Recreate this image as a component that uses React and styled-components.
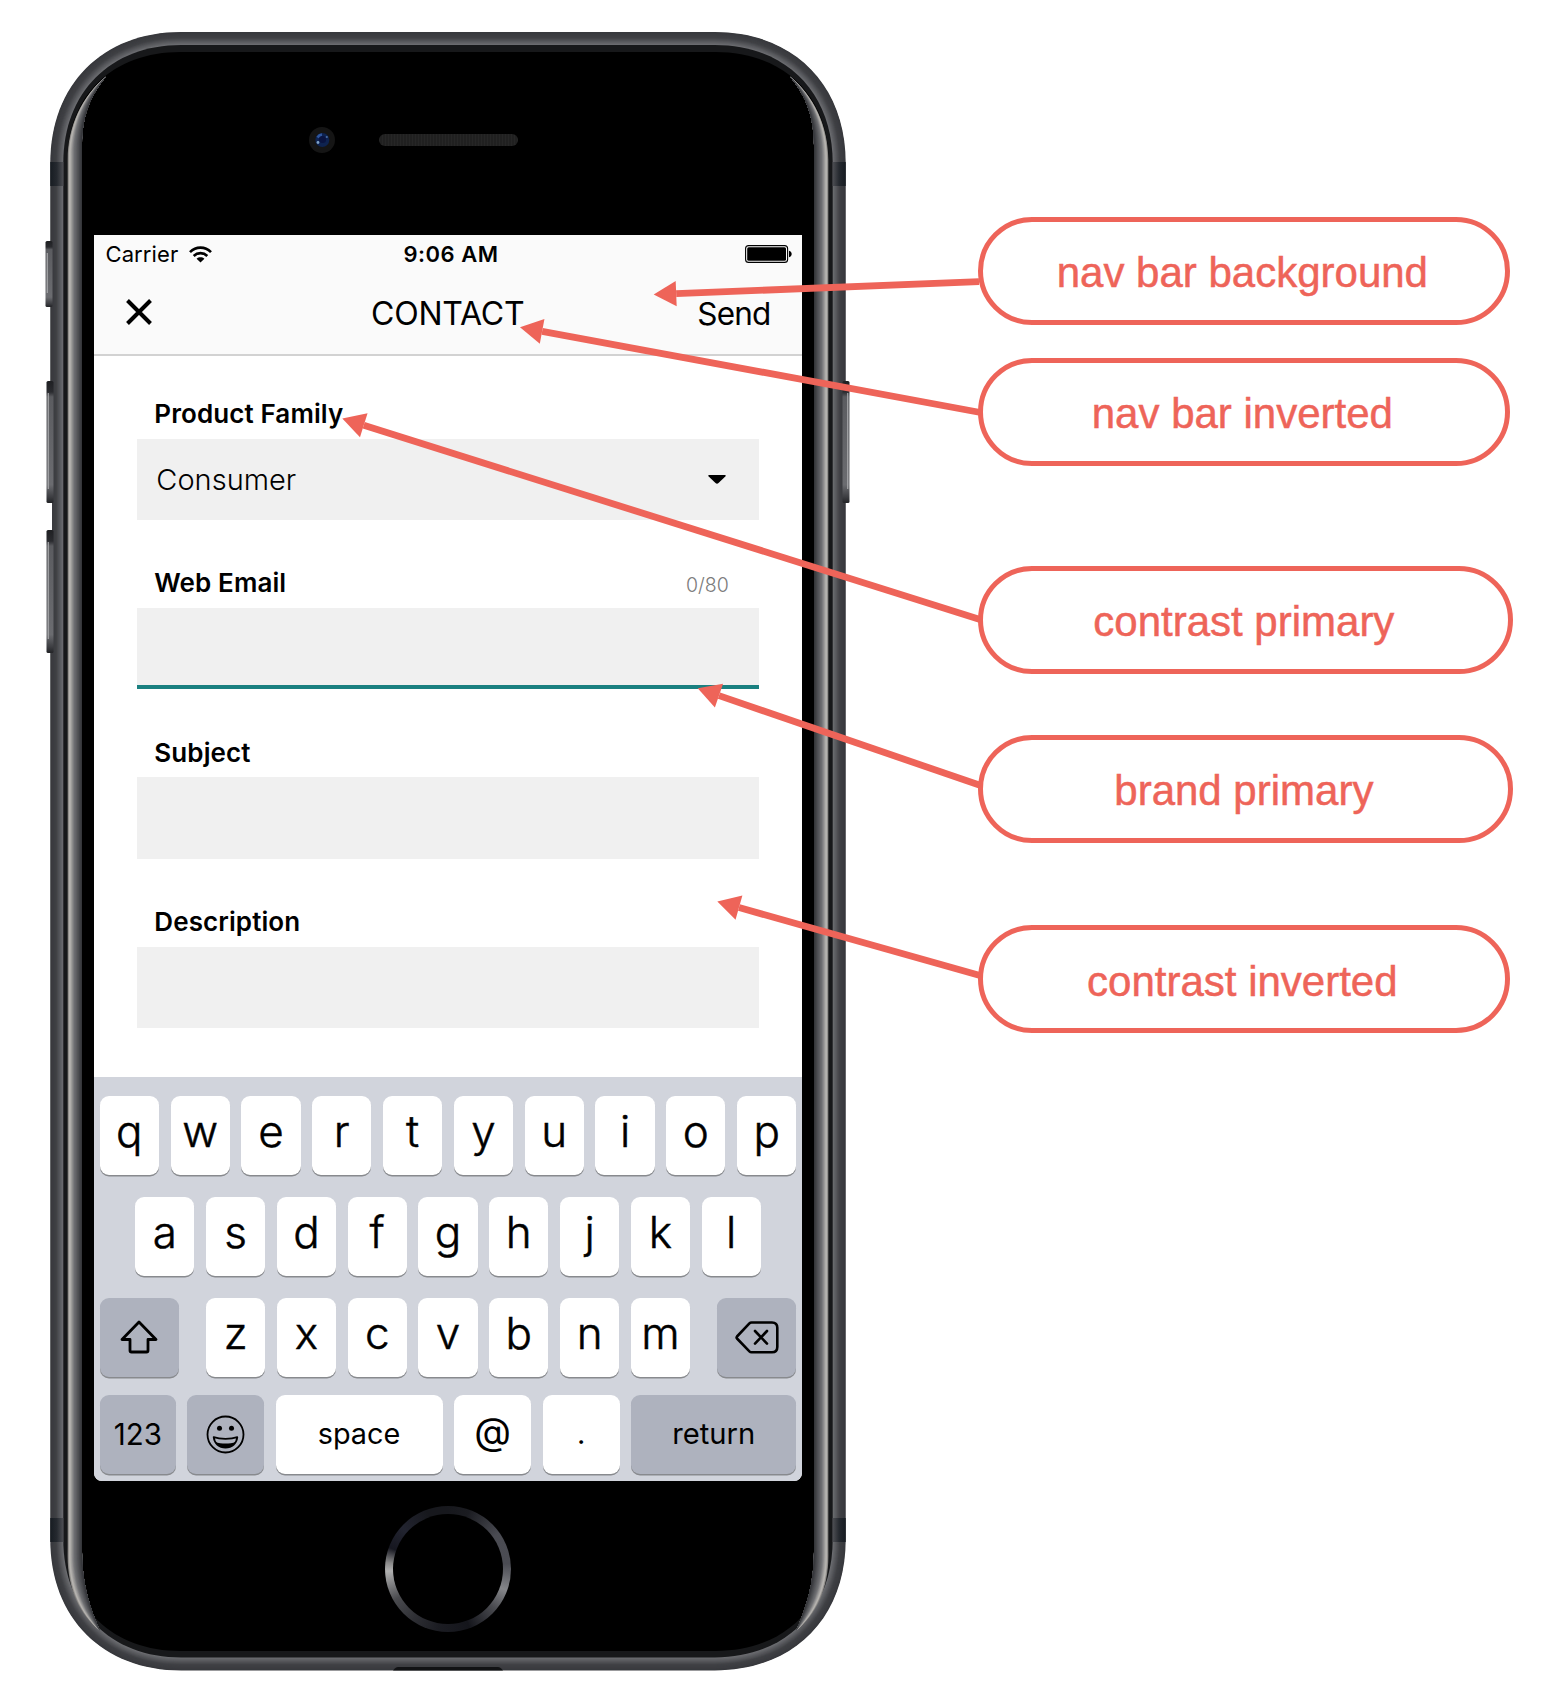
import React from "react";
import styled, { createGlobalStyle } from "styled-components";

const Global = createGlobalStyle`
  *, *::before, *::after { box-sizing: border-box; }
  body { margin: 0; background: #fff; overflow: hidden; }
`;

const ACCENT = "#ee6459";
const UI = `Inter, Roboto, "Liberation Sans", sans-serif`;

const Page = styled.main`
  position: relative;
  display: flex;
  width: 1552px;
  height: 1706px;
  background: #fff;
  font-family: ${UI};
  color: #000;
`;

/* ---------- device ---------- */

const Phone = styled.section`
  position: relative;
  display: flex;
  flex-direction: column;
  align-items: center;
  width: 896px;
  height: 1706px;
  flex: none;
`;

const Hardware = styled.svg`
  position: absolute;
  inset: 0;
`;

const TopBezel = styled.div`
  position: relative;
  display: flex;
  align-items: center;
  gap: 44px;
  width: 100%;
  height: 235px;
  padding: 45px 0 0 309px;
`;

const Camera = styled.svg`
  flex: none;
`;

const Speaker = styled.div`
  width: 139px;
  height: 12px;
  border-radius: 6px;
  background: repeating-linear-gradient(90deg, #262626 0 1px, #202020 1px 3px);
`;

const BottomBezel = styled.div`
  position: relative;
  display: flex;
  justify-content: center;
  width: 100%;
  padding-top: 25px;
`;

const HomeButton = styled.div`
  width: 126px;
  height: 126px;
  padding: 8px;
  border-radius: 50%;
  background: conic-gradient(
    #17181d 0deg,
    #1b1c21 20deg,
    #4a4b52 55deg,
    #4b4c53 85deg,
    #85868a 110deg,
    #4a4b50 130deg,
    #14151b 160deg,
    #1c1d23 190deg,
    #2e2f34 215deg,
    #4a4b4f 240deg,
    #b0b0b0 268deg,
    #8a8a8a 276deg,
    #161720 290deg,
    #222430 312deg,
    #17181d 340deg,
    #17181d 360deg
  );

  &::before {
    content: "";
    display: block;
    height: 100%;
    border-radius: 50%;
    background: #000;
  }
`;

/* ---------- screen ---------- */

const Screen = styled.div`
  position: relative;
  display: flex;
  flex-direction: column;
  width: 708px;
  height: 1246px;
  flex: none;
  background: #fff;
  border-radius: 0 0 8px 8px;
  overflow: hidden;
`;

const Header = styled.header`
  height: 121px;
  flex: none;
  background: #fafafa;
  border-bottom: 2px solid #d2d2d2;
`;

const StatusBar = styled.div`
  display: grid;
  grid-template-columns: 1fr auto 1fr;
  align-items: center;
  height: 38px;
  padding: 0 10.5px 0 11.5px;
  line-height: 38px;
`;

const Carrier = styled.div`
  display: flex;
  align-items: center;
  gap: 10.5px;
  font-size: 22px;
  letter-spacing: 0.1px;
`;

const Clock = styled.div`
  font-size: 22px;
  font-weight: 600;
  letter-spacing: 0.5px;
  padding-left: 5px;
`;

const Battery = styled.svg`
  justify-self: end;
`;

const NavBar = styled.div`
  display: grid;
  grid-template-columns: 1fr auto 1fr;
  align-items: center;
  height: 80px;
  padding: 0 31.5px 0 31px;
  font-size: 32px;
`;

const CloseIcon = styled.svg`
  margin-bottom: 2px;
`;

const NavTitle = styled.h1`
  margin: 0;
  font-size: 32px;
  font-weight: 400;
  letter-spacing: -0.2px;
`;

const SendButton = styled.span`
  justify-self: end;
  font-size: 31.5px;
  letter-spacing: -0.8px;
`;

const Form = styled.div`
  display: flex;
  flex-direction: column;
  flex: 1;
  padding: 0 43.3px;
`;

const Field = styled.div`
  height: 169.4px;
  flex: none;
  padding-top: 34px;
`;

const LabelRow = styled.div`
  display: flex;
  justify-content: space-between;
  height: 48.7px;
  padding: 0 30px 0 17px;
`;

const Label = styled.label`
  font-size: 26px;
  font-weight: 600;
  letter-spacing: 0.1px;
  line-height: 47px;
`;

const Counter = styled.span`
  font-size: 19.5px;
  font-weight: 300;
  line-height: 53px;
  color: #7c7c7c;
`;

const Input = styled.div`
  display: flex;
  align-items: center;
  justify-content: space-between;
  height: 81.3px;
  padding: 0 33px 0 19px;
  background: #f0f0f0;
  border-bottom: ${(p) => (p.$active ? "4px solid #1a8080" : "none")};
  font-size: 29px;
  font-weight: 300;
`;

/* ---------- keyboard ---------- */

const Keyboard = styled.div`
  display: flex;
  flex-direction: column;
  height: 404px;
  flex: none;
  padding: 19px 5.7px 0;
  background: #d1d4dc;
`;

const KeyRow = styled.div`
  display: flex;
  flex: none;
  justify-content: ${(p) => p.$justify || "space-between"};
  gap: ${(p) => p.$gap || "11.5px"};
  height: ${(p) => p.$height || 101}px;
`;

const Key = styled.div`
  display: flex;
  align-items: center;
  justify-content: center;
  width: ${(p) => p.$width || 59.3}px;
  height: 79px;
  flex: none;
  padding-bottom: ${(p) => p.$lift ?? 9}px;
  border-radius: 9px;
  background: ${(p) => (p.$dark ? "#aeb2be" : "#fff")};
  box-shadow: 0 1.5px 0 #888a8e;
  font-size: ${(p) => p.$size || 44}px;
  font-weight: ${(p) => p.$weight || 300};
  line-height: 1;
  -webkit-text-stroke: ${(p) => (p.$weight ? 0 : 0.5)}px #000;
`;

const LetterGroup = styled.div`
  display: flex;
  gap: 11.5px;
`;

/* ---------- callouts ---------- */

const Callouts = styled.aside`
  display: flex;
  flex-direction: column;
  align-items: flex-start;
  padding: 216.5px 0 0 82px;
`;

const Callout = styled.div`
  display: flex;
  align-items: center;
  justify-content: center;
  width: ${(p) => p.$width}px;
  height: 108px;
  margin-bottom: ${(p) => p.$after}px;
  padding: 5px 3px 0 0;
  border: 5px solid ${ACCENT};
  border-radius: 54px;
  background: #fff;
  color: ${ACCENT};
  font-family: "Liberation Sans", Arial, sans-serif;
  font-size: 42px;
  line-height: 1;
  white-space: nowrap;
  -webkit-text-stroke: 0.5px ${ACCENT};
`;

const Pointers = styled.svg`
  position: absolute;
  inset: 0;
  pointer-events: none;
`;

const mix = (a, b, t) => {
  const c = a.map((v, i) => Math.round(v + (b[i] - v) * t));
  return `rgb(${c.join(",")})`;
};

/* Rounded rectangle whose corners are slightly fuller than a circular arc. */
function shell(x, y, x2, y2, rx, ry, k = 0.6) {
  const hx = rx * (1 - k);
  const hy = ry * (1 - k);
  return `M${x} ${y + ry}C${x} ${y + hy} ${x + hx} ${y} ${x + rx} ${y}H${x2 - rx}C${x2 - hx} ${y} ${x2} ${y + hy} ${x2} ${y + ry}V${y2 - ry}C${x2} ${y2 - hy} ${x2 - hx} ${y2} ${x2 - rx} ${y2}H${x + rx}C${x + hx} ${y2} ${x} ${y2 - hy} ${x} ${y2 - ry}Z`;
}

/* One layer of the polished edge; t runs from the outer rim (0) to the glass (1). */
const GLOSS_OUT = [82, 96, 67.6, 126, 67.6, 160, 1556, 67.6, 1590, 80, 1614];
const GLOSS_IN = [93, 93, 82, 112, 82, 145, 1552, 82, 1584, 90, 1608];
function glossPath(t) {
  const v = GLOSS_OUT.map((o, i) => o + (GLOSS_IN[i] - o) * t);
  const n = GLOSS_IN;
  return `M106 76.5C${v[0]} ${v[1]} ${v[2]} ${v[3]} ${v[4]} ${v[5]}V${v[6]}C${v[7]} ${v[8]} ${v[9]} ${v[10]} 100 1631C${n[9]} ${n[10]} ${n[7]} ${n[8]} ${n[4]} ${n[6]}V${n[5]}C${n[2]} ${n[3]} ${n[0]} ${n[1]} 106 76.5Z`;
}

function glossColor(t) {
  if (t < 0.12) return mix([130, 128, 126], [190, 187, 183], t / 0.12);
  if (t < 0.45) return mix([190, 187, 183], [112, 113, 116], (t - 0.12) / 0.33);
  return mix([112, 113, 116], [52, 53, 57], (t - 0.45) / 0.55);
}

function Side() {
  return (
    <>
      <rect x="50.3" y="162" width="13" height="24" fill="url(#band)" />
      <rect x="50.3" y="1518" width="13" height="24" fill="url(#band)" />
      {Array.from({ length: 20 }, (_, i) => (
        <path key={i} d={glossPath(i / 20)} fill={glossColor(i / 19)} />
      ))}
    </>
  );
}

function Body() {
  const steps = 26;
  const rings = Array.from({ length: steps }, (_, i) => {
    const d = (i / steps) * 13;
    const t = i / (steps - 1);
    const fill =
      t < 0.45
        ? mix([56, 57, 61], [64, 65, 69], t / 0.45)
        : mix([64, 65, 69], [108, 109, 113], (t - 0.45) / 0.55);
    return <path key={i} d={shell(50.3 + d, 32 + d, 845.7 - d, 1670.4 - d, 131 - d, 131 - d)} fill={fill} />;
  });
  const sideKeys = [
    { x: 45.5, y: 241, h: 66 },
    { x: 46.5, y: 381, h: 122 },
    { x: 46.5, y: 530, h: 123 },
    { x: 842.5, y: 381, h: 122 },
  ];
  return (
    <Hardware width="896" height="1706" viewBox="0 0 896 1706">
      <defs>
        <linearGradient id="band" x1="0" x2="1" y1="0" y2="0">
          <stop offset="0" stopColor="#171c22" />
          <stop offset="0.5" stopColor="#25292f" />
          <stop offset="1" stopColor="#4e4f54" />
        </linearGradient>
        <linearGradient id="sideKey" x1="0" x2="0" y1="0" y2="1">
          <stop offset="0" stopColor="#1f2023" />
          <stop offset="0.09" stopColor="#2a2b2f" />
          <stop offset="0.13" stopColor="#5b5c60" />
          <stop offset="0.85" stopColor="#6b6c70" />
          <stop offset="0.95" stopColor="#3d3e42" />
          <stop offset="1" stopColor="#222326" />
        </linearGradient>
      </defs>
      {rings}
      <rect x="49" y="503" width="3" height="27" fill="#fff" />
      {sideKeys.map((k) => (
        <g key={`${k.x}-${k.y}`}>
          <rect x={k.x} y={k.y} width="7" height={k.h} rx="1.5" fill="url(#sideKey)" />
          <rect x={k.x < 400 ? k.x + 1.2 : k.x + 4.6} y={k.y + 12} width="1.2" height={k.h - 26} fill="#a5a6a8" />
        </g>
      ))}
      <path d={shell(63.3, 45, 832.7, 1657.4, 118, 118)} fill="#17181a" />
      <path d={shell(67.6, 52, 828.4, 1651, 113, 108)} fill="#000" />
      <Side />
      <g transform="translate(896 0) scale(-1 1)">
        <Side />
      </g>
      <path d="M393 1670.4C395 1667.5 397 1667 400 1667H496C499 1667 501 1667.5 503 1670.4Z" fill="#111214" />
    </Hardware>
  );
}

const POINTERS = [
  { tip: [653.7, 294.6], end: [979, 281.6] },
  { tip: [520, 327.3], end: [980.5, 412.5] },
  { tip: [342.3, 418.5], end: [980, 619.5] },
  { tip: [697.7, 688.3], end: [980, 785.3] },
  { tip: [717.3, 901.5], end: [980, 975.5] },
];

function Arrow({ tip, end }) {
  const dx = end[0] - tip[0];
  const dy = end[1] - tip[1];
  const len = Math.hypot(dx, dy);
  const u = [dx / len, dy / len];
  const b = [tip[0] + u[0] * 22.5, tip[1] + u[1] * 22.5];
  const n = [-u[1] * 12.6, u[0] * 12.6];
  return (
    <g>
      <line x1={b[0]} y1={b[1]} x2={end[0]} y2={end[1]} stroke={ACCENT} strokeWidth="6.8" />
      <polygon points={`${tip} ${b[0] + n[0]},${b[1] + n[1]} ${b[0] - n[0]},${b[1] - n[1]}`} fill={ACCENT} />
    </g>
  );
}

const WifiIcon = () => (
  <svg width="23" height="17" viewBox="0 0 23 17" fill="none" stroke="#000" strokeWidth="2.7">
    <path d="M1 6.1C7 0.2 16 0.2 22 6.1" />
    <path d="M4.7 9.9C8.6 6.2 14.4 6.2 18.3 9.9" />
    <path d="M11.5 16.6L7.6 12.8C9.8 10.9 13.2 10.9 15.4 12.8Z" fill="#000" stroke="none" />
  </svg>
);

const BatteryIcon = () => (
  <Battery width="47" height="18" viewBox="0 0 47 18">
    <rect x="0.6" y="0.6" width="42" height="16.8" rx="3" fill="none" stroke="#000" strokeWidth="1.1" />
    <rect x="2.2" y="2.2" width="38.8" height="13.6" rx="1.5" />
    <path d="M44 5.8C47.6 6.5 47.6 11.5 44 12.2Z" />
  </Battery>
);

const CaretIcon = () => (
  <svg width="18" height="9" viewBox="0 0 18 9">
    <path d="M1 0H17Q18.3 0.5 17.3 1.5L10.5 8Q9 9.3 7.5 8L0.7 1.5Q-0.3 0.5 1 0Z" />
  </svg>
);

const ShiftIcon = () => (
  <svg width="38" height="34" viewBox="0 0 38 34" fill="none" stroke="#000" strokeWidth="2.8" strokeLinejoin="round">
    <path d="M19 2L36 19.5H28V30.5Q28 32 26.5 32H11.5Q10 32 10 30.5V19.5H2Z" />
  </svg>
);

const DeleteIcon = () => (
  <svg width="44" height="33" viewBox="0 0 44 33" fill="none" stroke="#000" strokeWidth="2.6" strokeLinejoin="round" strokeLinecap="round">
    <path d="M16.5 1.5H37Q42.3 1.5 42.3 6.8V26Q42.3 31.3 37 31.3H16.5Q15.3 31.3 14.4 30.4L2 17.5Q1.2 16.5 2 15.5L14.4 2.4Q15.3 1.5 16.5 1.5Z" />
    <path d="M20 10L32 22.6M32 10L20 22.6" />
  </svg>
);

const SmileIcon = () => (
  <svg width="39" height="39" viewBox="0 0 39 39" fill="none" stroke="#000" strokeWidth="1.8">
    <circle cx="19.5" cy="19.5" r="18" />
    <circle cx="13.5" cy="13.3" r="2.5" fill="#000" stroke="none" />
    <circle cx="25.5" cy="13.3" r="2.5" fill="#000" stroke="none" />
    <path d="M7.7 22.2C14 24.3 25 24.3 31.3 22.2C30.5 28.5 26 32.6 19.5 32.6S8.5 28.5 7.7 22.2Z" strokeLinejoin="round" />
    <path d="M9.5 27C15 29 24 29 29.5 27C27.5 30.5 24 32.6 19.5 32.6S11.5 30.5 9.5 27Z" fill="#000" stroke="none" />
  </svg>
);

const FIELDS = [
  { label: "Product Family", value: "Consumer", select: true },
  { label: "Web Email", counter: "0/80", active: true },
  { label: "Subject" },
  { label: "Description" },
];

const CALLOUTS = [
  { text: "nav bar background", width: 531.7, after: 33 },
  { text: "nav bar inverted", width: 531.7, after: 100 },
  { text: "contrast primary", width: 534.7, after: 61 },
  { text: "brand primary", width: 534.7, after: 82.6 },
  { text: "contrast inverted", width: 531.7, after: 0 },
];

export default function App() {
  return (
    <>
      <Global />
      <Page>
        <Phone>
          <Body />
          <TopBezel>
            <Camera width="26" height="26" viewBox="0 0 26 26">
              <circle cx="13" cy="13" r="13" fill="#151515" />
              <circle cx="13.3" cy="13" r="7" fill="#0e2350" />
              <circle cx="13.5" cy="12.5" r="3.6" fill="#0a1440" />
              <path d="M8.5 10.5A6 6 0 0 1 13 7.6" stroke="#2f569c" strokeWidth="2.5" fill="none" />
              <circle cx="9" cy="15.5" r="1.4" fill="#7fa3c8" />
              <circle cx="17.8" cy="10" r="1.1" fill="#4a6fa5" />
            </Camera>
            <Speaker />
          </TopBezel>
          <Screen>
            <Header>
              <StatusBar>
                <Carrier>
                  Carrier
                  <WifiIcon />
                </Carrier>
                <Clock>9:06 AM</Clock>
                <BatteryIcon />
              </StatusBar>
              <NavBar>
                <CloseIcon width="28" height="28" viewBox="0 0 28 28" stroke="#000" strokeWidth="4">
                  <path d="M2.5 2.5L25.5 25.5M25.5 2.5L2.5 25.5" />
                </CloseIcon>
                <NavTitle>CONTACT</NavTitle>
                <SendButton>Send</SendButton>
              </NavBar>
            </Header>
            <Form>
              {FIELDS.map((f) => (
                <Field key={f.label}>
                  <LabelRow>
                    <Label>{f.label}</Label>
                    {f.counter && <Counter>{f.counter}</Counter>}
                  </LabelRow>
                  <Input $active={f.active}>
                    {f.value}
                    {f.select && <CaretIcon />}
                  </Input>
                </Field>
              ))}
            </Form>
            <Keyboard>
              <KeyRow>
                {[..."qwertyuiop"].map((c) => (
                  <Key key={c}>{c}</Key>
                ))}
              </KeyRow>
              <KeyRow $justify="center">
                {[..."asdfghjkl"].map((c) => (
                  <Key key={c}>{c}</Key>
                ))}
              </KeyRow>
              <KeyRow $height={97}>
                <Key $dark $width={79} $lift={1}>
                  <ShiftIcon />
                </Key>
                <LetterGroup>
                  {[..."zxcvbnm"].map((c) => (
                    <Key key={c}>{c}</Key>
                  ))}
                </LetterGroup>
                <Key $dark $width={79} $lift={1}>
                  <DeleteIcon />
                </Key>
              </KeyRow>
              <KeyRow $gap="0px">
                <Key $dark $width={76.3} $size={29.5} $weight={400} $lift={0}>123</Key>
                <Key $dark $width={77} $lift={1}>
                  <SmileIcon />
                </Key>
                <Key $width={167} $size={28.8} $weight={400} $lift={1}>space</Key>
                <Key $width={77.5} $size={38} $weight={400} $lift={7}>@</Key>
                <Key $width={77.5} $size={29} $weight={400} $lift={2}>.</Key>
                <Key $dark $width={165} $size={29.2} $weight={400} $lift={2}>return</Key>
              </KeyRow>
            </Keyboard>
          </Screen>
          <BottomBezel>
            <HomeButton />
          </BottomBezel>
        </Phone>
        <Callouts>
          {CALLOUTS.map((c) => (
            <Callout key={c.text} $width={c.width} $after={c.after}>
              {c.text}
            </Callout>
          ))}
        </Callouts>
        <Pointers width="1552" height="1706" viewBox="0 0 1552 1706">
          {POINTERS.map((p) => (
            <Arrow key={p.tip[0]} {...p} />
          ))}
        </Pointers>
      </Page>
    </>
  );
}
